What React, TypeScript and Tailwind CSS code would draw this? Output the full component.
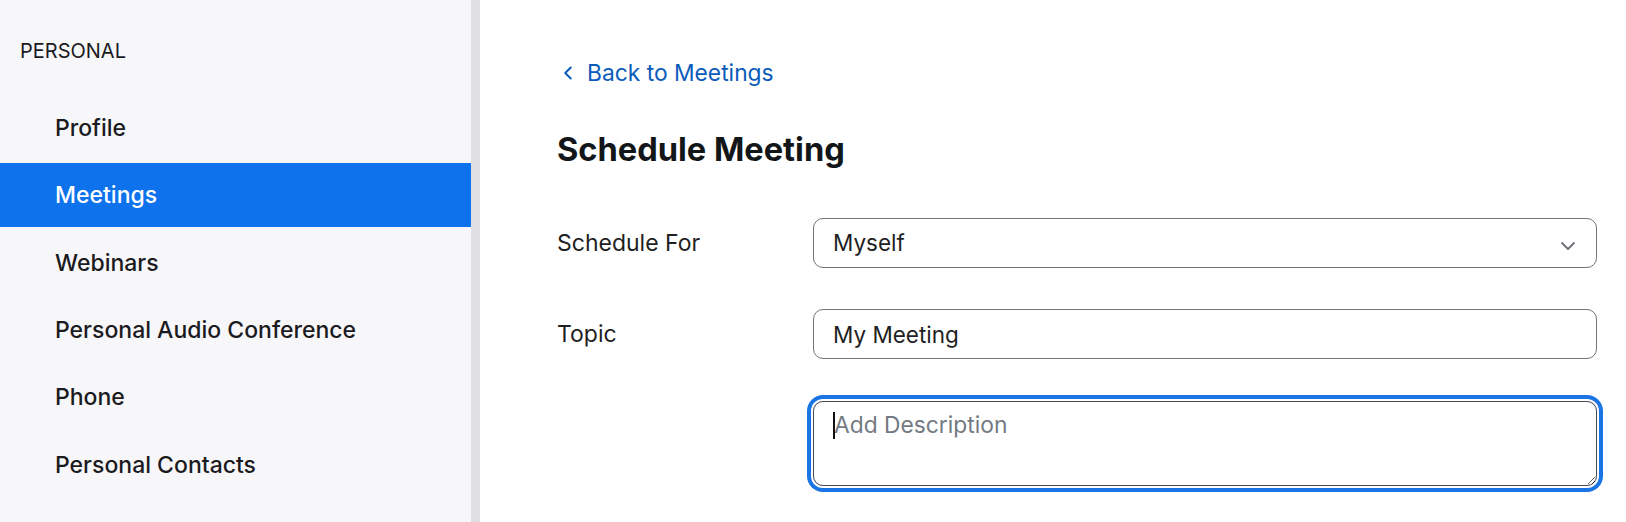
import { ChevronDown, ChevronLeft } from "lucide-react";

const navItems = [
  "Profile",
  "Meetings",
  "Webinars",
  "Personal Audio Conference",
  "Phone",
  "Personal Contacts",
];

const Sidebar = () => {
  return (
    <aside className="w-[480px] shrink-0 border-r-[9px] border-[#e0e0e2] bg-[#f7f7f9]">
      <p className="mt-[39px] pl-[20px] text-[20px] leading-[24px] text-[#1b1b1f]">
        PERSONAL
      </p>

      <nav className="mt-[33px] flex flex-col gap-[3.4px]">
        {navItems.map((item) => (
          <a
            key={item}
            href="#"
            className={
              item === "Meetings"
                ? "flex h-16 items-center bg-[#0e72ed] pl-[55px] text-[23px] font-medium text-white"
                : "flex h-16 items-center pl-[55px] text-[23px] font-medium text-[#1b1b1f]"
            }
          >
            {item}
          </a>
        ))}
      </nav>
    </aside>
  );
};

const App = () => {
  return (
    <div className="flex h-[522px] w-full overflow-hidden bg-white font-['Inter',sans-serif]">
      <Sidebar />

      <main className="flex-1 pl-[77px] pr-[29px]">
        {/* back link */}
        <a
          href="#"
          className="mt-[59px] flex h-[28px] items-center text-[22.8px] leading-[28px] text-[#0b5cba]"
        >
          <ChevronLeft className="h-[22px] w-[22px]" strokeWidth={2.2} />
          <span className="ml-[8px]">Back to Meetings</span>
        </a>

        <h1 className="mt-[42px] text-[32.6px] font-bold leading-[40px] text-[#131619]">
          Schedule Meeting
        </h1>

        <section className="mt-[49px] flex flex-col gap-[41px]">
          <div className="flex items-center">
            <label className="w-[256px] shrink-0 text-[23px] text-[#1f1f23]">
              Schedule For
            </label>
            <div className="flex h-[50px] flex-1 items-center justify-between rounded-[10px] border border-[#74747c] pl-[19px] pr-[16px]">
              <span className="text-[22.5px] text-[#1f1f23]">Myself</span>
              <ChevronDown className="mt-[6px] h-[24px] w-[24px] text-[#6e6e76]" strokeWidth={1.8} />
            </div>
          </div>

          <div className="flex items-center">
            <label className="w-[256px] shrink-0 text-[23px] text-[#1f1f23]">
              Topic
            </label>
            <input
              readOnly
              value="My Meeting"
              className="h-[50px] flex-1 rounded-[10px] border border-[#74747c] pl-[19px] text-[22.5px] text-[#1f1f23] outline-none"
            />
          </div>
        </section>

        <div className="relative ml-[256px] mt-[42px]">
          <textarea
            placeholder="Add Description"
            className="block h-[85px] w-full rounded-[10px] border border-[#4b4b53] pl-[20px] pt-[9px] text-[22.8px] leading-[28px] text-[#1f1f23] shadow-[0_0_0_2px_#ffffff,0_0_0_6px_#1b74e4] outline-none placeholder:text-[#747a82]"
          />
          {/* caret */}
          <span className="absolute left-[20px] top-[11px] h-[27px] w-[2px] bg-[#111111]" />
        </div>
      </main>
    </div>
  );
};

export default App;
